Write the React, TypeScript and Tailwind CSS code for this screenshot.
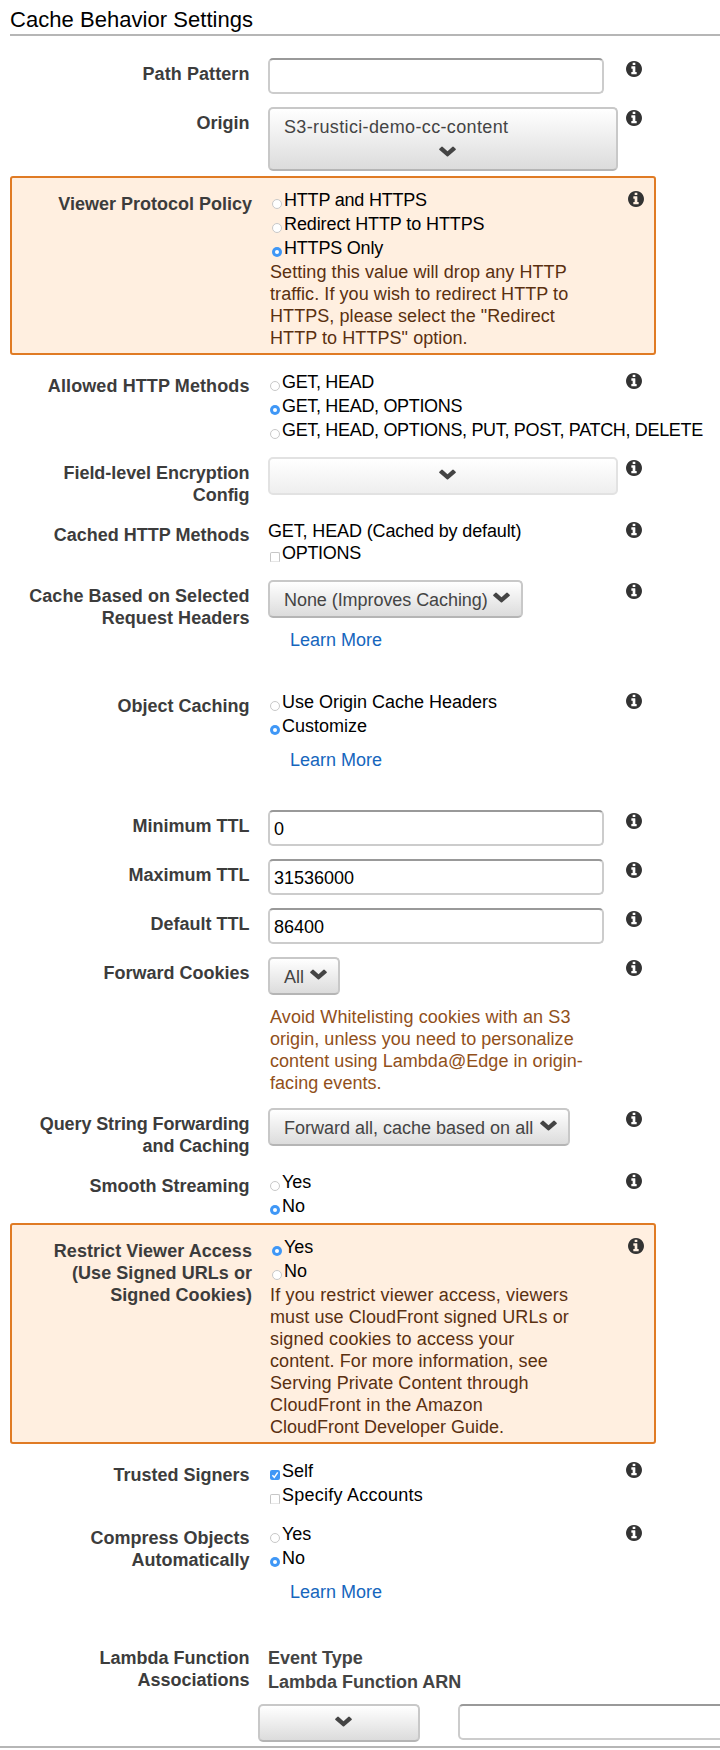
import type { ReactNode } from "react";

function Chevron({ className = "" }: { className?: string }) {
  return (
    <svg viewBox="0 0 17 11" className={`h-[11px] w-[17px] shrink-0 fill-[#444] ${className}`}>
      <path d="M.4 2.7 2.2 .9Q3 .2 3.8 .9L8.5 5.2 13.2 .9Q14 .2 14.8 .9L16.6 2.7Q17.2 3.4 16.5 4.1L9.2 10.3Q8.5 10.8 7.8 10.3L.5 4.1Q-.2 3.4.4 2.7Z" />
    </svg>
  );
}

function Info() {
  return (
    <svg viewBox="0 0 1536 1536" className="mt-[2.5px] size-4 shrink-0 fill-[#333]">
      <path d="M1024 1248v-160q0-14-9-23t-23-9h-96v-512q0-14-9-23t-23-9h-320q-14 0-23 9t-9 23v160q0 14 9 23t23 9h96v320h-96q-14 0-23 9t-9 23v160q0 14 9 23t23 9h448q14 0 23-9t9-23zM896 352v-160q0-14-9-23t-23-9h-192q-14 0-23 9t-9 23v160q0 14 9 23t23 9h192q14 0 23-9t9-23zM1536 768q0 209-103 385.5t-279.5 279.5-385.5 103-385.5-103-279.5-279.5-103-385.5 103-385.5 279.5-279.5 385.5-103 385.5 103 279.5 279.5 103 385.5z" />
    </svg>
  );
}

type RowProps = { label: ReactNode; children: ReactNode; h: string; info?: boolean };

function Row({ label, children, h, info = true }: RowProps) {
  return (
    <div className={`flex shrink-0 items-start ${h}`}>
      <div className="w-[249.5px] shrink-0 pt-[5px] text-right font-bold whitespace-nowrap text-[#3c3c3c]">{label}</div>
      <div className="ml-[18.5px] w-[358px] shrink-0 whitespace-nowrap">{children}</div>
      {info && <Info />}
    </div>
  );
}

function Callout({ label, children, h }: RowProps) {
  return (
    <div className={`ml-2.5 flex w-[646px] shrink-0 items-start rounded-[3px] border-2 border-[#e07b24] bg-[#ffefe0] pt-[10px] ${h}`}>
      <div className="w-[240px] shrink-0 pt-[5px] text-right font-bold whitespace-nowrap text-[#3c3c3c]">{label}</div>
      <div className="ml-[18px] w-[358px] shrink-0 whitespace-nowrap">{children}</div>
      <Info />
    </div>
  );
}

type OptionProps = { on?: boolean; children: ReactNode; track?: string };

function Radio({ on = false, children, track = "" }: OptionProps) {
  return (
    <div className="flex h-6 items-start pl-0.5">
      <span
        className={`mt-[10px] mr-[2px] flex size-[10px] shrink-0 items-center justify-center rounded-full ${
          on ? "bg-[#3f97f6]" : "border border-[#c8c8c8] bg-white"
        }`}
      >
        {on && <span className="size-[4px] rounded-full bg-white" />}
      </span>
      <span className={track}>{children}</span>
    </div>
  );
}

function Check({ on = false, children, track = "" }: OptionProps) {
  return (
    <div className="flex h-6 items-start pl-0.5">
      <span
        className={`mt-[10px] mr-[2px] size-[10px] shrink-0 ${
          on ? "rounded-[2px] bg-[#3f97f6]" : "rounded-t-[2px] border border-[#c6c6c6] border-b-[#e6e6e6] bg-white"
        }`}
      >
        {on && (
          <svg viewBox="0 0 10 10" className="size-[10px] fill-none stroke-white stroke-[1.5]">
            <path d="M2.4 5.3 4.3 7.4 7.7 2.3" />
          </svg>
        )}
      </span>
      <span className={track}>{children}</span>
    </div>
  );
}

function Field({ value = "", w = "w-[336px]" }: { value?: string; w?: string }) {
  return (
    <div className={`h-9 shrink-0 rounded-[5px] border-2 border-[#ccc] border-t-[#999] bg-white pt-[6px] pl-1 ${w}`}>{value}</div>
  );
}

function Select({ children, w }: { children?: ReactNode; w: string }) {
  return (
    <div
      className={`flex h-[38px] shrink-0 items-start rounded-[5px] border-2 border-[#c8c8c8] border-b-[#b5b5b5] bg-linear-to-b from-white to-[#dcdcdc] pl-[14px] text-[#444] ${w}`}
    >
      <span className="pt-[7px]">{children}</span>
      <Chevron className="mt-[10px] mr-[11.5px] ml-auto" />
    </div>
  );
}

function LearnMore({ className = "" }: { className?: string }) {
  return <a className={`ml-[22px] block text-[#1666bd] ${className}`}>Learn More</a>;
}

export default function App() {
  return (
    <div className="flex h-[1750px] w-[720px] flex-col overflow-hidden bg-white font-['Liberation_Sans',Arial,sans-serif] text-[18px] leading-[22px] text-black">
      <h1 className="mb-[22px] ml-2.5 h-9 shrink-0 border-b-2 border-[#b6b6b6] pt-[7px] text-[22px] leading-[25px] tracking-[0.04px]">
        Cache Behavior Settings
      </h1>
      <Row label={<span className="tracking-[0.08px]">Path Pattern</span>} h="h-[49px]"><Field /></Row>
      <Row label="Origin" h="h-[69px]">
        <div className="flex h-16 w-[350px] flex-col rounded-[5px] border-2 border-[#c8c8c8] border-b-[#b5b5b5] bg-linear-to-b from-white to-[#dcdcdc] pt-[7px] pl-[14px] text-[#444]">
          <span className="tracking-[0.36px]">S3-rustici-demo-cc-content</span>
          <Chevron className="mt-[8px] ml-[155px]" />
        </div>
      </Row>
      <Callout label="Viewer Protocol Policy" h="h-[179px]">
        <div className="pt-px">
          <Radio track="tracking-[-0.2px]">HTTP and HTTPS</Radio>
          <Radio track="tracking-[-0.1px]">Redirect HTTP to HTTPS</Radio>
          <Radio track="tracking-[-0.2px]" on>HTTPS Only</Radio>
        </div>
        <p className="tracking-[0.07px] text-[#5a3010]">
          Setting this value will drop any HTTP<br />traffic. If you wish to redirect HTTP to<br />HTTPS, please select the "Redirect<br />HTTP to HTTPS" option.
        </p>
      </Callout>
      <div className="h-[15px] shrink-0" />
      <Row label={<span className="tracking-[0.1px]">Allowed HTTP Methods</span>} h="h-[87px]">
        <div className="pt-px">
          <Radio track="tracking-[-0.35px]">GET, HEAD</Radio>
          <Radio track="tracking-[-0.33px]" on>GET, HEAD, OPTIONS</Radio>
          <Radio track="tracking-[-0.33px]">GET, HEAD, OPTIONS, PUT, POST, PATCH, DELETE</Radio>
        </div>
      </Row>
      <Row label={<span className="tracking-[-0.05px]">Field-level Encryption<br />Config</span>} h="h-[62px]">
        <div className="flex h-[38px] w-[350px] items-start rounded-[5px] border-2 border-[#e2e2e2] bg-linear-to-b from-white to-[#eee]">
          <Chevron className="mt-[10px] ml-[169px]" />
        </div>
      </Row>
      <Row label="Cached HTTP Methods" h="h-[61px]">
        <div className="pt-px tracking-[-0.13px]">GET, HEAD (Cached by default)</div>
        <Check track="tracking-[-0.3px]">OPTIONS</Check>
      </Row>
      <Row label={<span className="tracking-[0.05px]">Cache Based on Selected<br />Request Headers</span>} h="h-[110px]">
        <Select w="w-[255px]"><span className="tracking-[-0.06px]">None (Improves Caching)</span></Select>
        <LearnMore className="mt-[11px]" />
      </Row>
      <Row label="Object Caching" h="h-[120px]">
        <div className="pt-px">
          <Radio>Use Origin Cache Headers</Radio>
          <Radio on>Customize</Radio>
        </div>
        <LearnMore className="mt-[10px]" />
      </Row>
      <Row label="Minimum TTL" h="h-[49px]"><Field value="0" /></Row>
      <Row label="Maximum TTL" h="h-[49px]"><Field value="31536000" /></Row>
      <Row label="Default TTL" h="h-[49px]"><Field value="86400" /></Row>
      <Row label="Forward Cookies" h="h-[151px]">
        <Select w="w-[72px]">All</Select>
        <p className="mt-[11px] ml-0.5 tracking-[0.04px] text-[#91501a]">
          <span className="tracking-[0.1px]">Avoid Whitelisting cookies with an S3</span><br />origin, unless you need to personalize<br />content using Lambda@Edge in origin-<br />facing events.
        </p>
      </Row>
      <Row label={<span className="tracking-[-0.1px]">Query String Forwarding<br />and Caching</span>} h="h-[62px]">
        <Select w="w-[302px]">Forward all, cache based on all</Select>
      </Row>
      <Row label="Smooth Streaming" h="h-[53px]">
        <div className="pt-px"><Radio>Yes</Radio><Radio on>No</Radio></div>
      </Row>
      <Callout label={<span className="tracking-[0.05px]">Restrict Viewer Access<br />(Use Signed URLs or<br />Signed Cookies)</span>} h="h-[221px]">
        <div className="pt-px"><Radio on>Yes</Radio><Radio>No</Radio></div>
        <p className="tracking-[0.08px] text-[#5a3010]">
          <span className="tracking-[0.16px]">If you restrict viewer access, viewers</span><br />must use CloudFront signed URLs or<br />
          <span className="tracking-[0.15px]">signed cookies to access your</span><br />content. For more information, see<br />Serving Private Content through<br />
          <span className="tracking-[0.2px]">CloudFront in the Amazon</span><br /><span className="tracking-normal">CloudFront Developer Guide.</span>
        </p>
      </Callout>
      <div className="h-[15px] shrink-0" />
      <Row label="Trusted Signers" h="h-[63px]">
        <div className="pt-px"><Check on>Self</Check><Check track="tracking-[0.25px]">Specify Accounts</Check></div>
      </Row>
      <Row label={<>Compress Objects<br />Automatically</>} h="h-[120px]">
        <div className="pt-px"><Radio>Yes</Radio><Radio on>No</Radio></div>
        <LearnMore className="mt-[10px]" />
      </Row>
      <Row label={<>Lambda Function<br />Associations</>} h="h-[62px]" info={false}>
        <div className="pt-[5px] leading-6 font-bold text-[#444]">
          <div className="-mt-px">Event Type</div>
          <div>Lambda Function ARN</div>
        </div>
      </Row>
      <div className="flex h-[42px] shrink-0 items-start pl-[258px]">
        <div className="flex h-[38px] w-[162px] shrink-0 justify-center rounded-[5px] border-2 border-[#c8c8c8] border-b-[#b5b5b5] bg-linear-to-b from-white to-[#dcdcdc] pl-[9px]">
          <Chevron className="mt-[10px]" />
        </div>
        <div className="ml-[38px] flex"><Field w="w-[336px]" /></div>
      </div>
      <div className="h-0.5 shrink-0 bg-[#b6b6b6]" />
    </div>
  );
}
